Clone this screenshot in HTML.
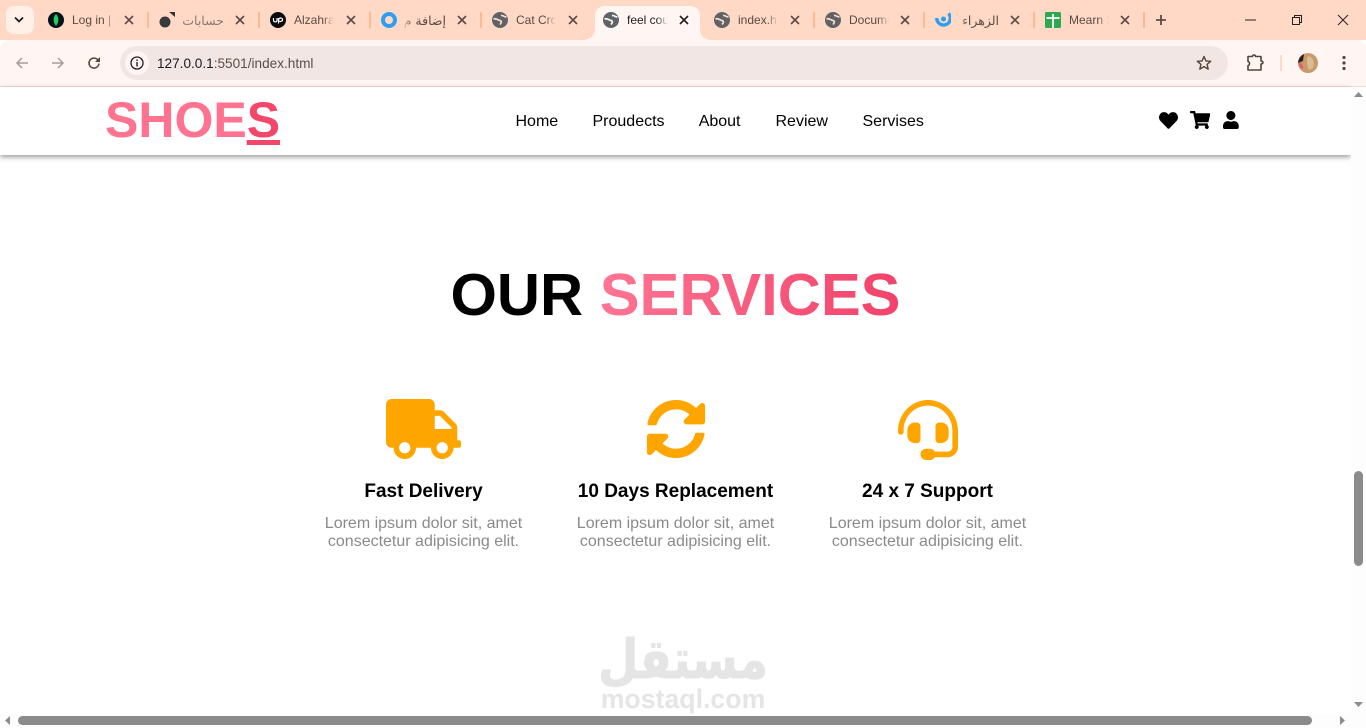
<!DOCTYPE html>
<html lang="en">
<head>
<meta charset="utf-8">
<title>feel cool</title>
<style>
*{box-sizing:border-box}
html,body{margin:0;padding:0;width:1366px;height:728px;overflow:hidden;background:#fff;font-family:"Liberation Sans","DejaVu Sans",sans-serif}
.a{position:absolute}
svg{position:absolute;display:block}
#strip{left:0;top:0;width:1366px;height:40px;background:#ffd9c6}
#bar{left:0;top:40px;width:1366px;height:47px;background:#fff6f3;border-radius:10px 10px 0 0;border-bottom:1px solid #f7dcd2}
#omni{left:120px;top:46px;width:1108px;height:34px;border-radius:17px;background:#f1e6e3}
.sep{position:absolute;top:12px;width:2px;height:16px;background:#fdb98f}
.t{position:absolute;top:13px;height:15px;width:46px;overflow:hidden;white-space:nowrap;font-size:12px;line-height:15px;color:#5b4a44;-webkit-mask-image:linear-gradient(90deg,#000 72%,transparent 100%);mask-image:linear-gradient(90deg,#000 72%,transparent 100%)}
.r{text-align:right;direction:rtl;font-family:"DejaVu Sans",sans-serif;font-size:12.500px;-webkit-mask-image:linear-gradient(270deg,#000 78%,transparent 100%);mask-image:linear-gradient(270deg,#000 78%,transparent 100%)}
.nav{position:absolute;top:113px;font-size:16px;line-height:18px;color:#000;white-space:nowrap}
.card{position:absolute;top:482px;width:252px;text-align:center}
.card h3{margin:0;font-size:19px;line-height:20px;font-weight:700;color:#000}
.card p{margin:13px 0 0;font-size:16px;line-height:18px;color:#8a8a8a}
</style>
</head>
<body>
<div class="a" id="strip"></div>

<!-- tab search button -->
<div class="a" style="left:6px;top:6px;width:28px;height:28px;border-radius:8px;background:#fff0e8"></div>
<svg style="left:14px;top:16px" width="10" height="8" viewBox="0 0 10 8"><path d="M1 1.500 5 5.500 9 1.500" fill="none" stroke="#1f1f1f" stroke-width="1.800"/></svg>

<div class="a" id="bar"></div>

<!-- active tab -->
<svg style="left:583px;top:6px" width="128" height="34" viewBox="0 0 128 34"><path d="M0 34C7 34 12 29 12 24V10C12 4 16 0 22 0H107C113 0 117 4 117 10V24C117 29 121 34 128 34Z" fill="#fff6f3"/></svg>

<!-- separators -->
<div class="sep" style="left:147px"></div>
<div class="sep" style="left:258px"></div>
<div class="sep" style="left:369px"></div>
<div class="sep" style="left:480px"></div>
<div class="sep" style="left:813px"></div>
<div class="sep" style="left:923px"></div>
<div class="sep" style="left:1033px"></div>
<div class="sep" style="left:1143px"></div>

<!-- favicons -->
<svg style="left:48px;top:12px" width="16" height="16" viewBox="0 0 16 16"><circle cx="8" cy="8" r="8" fill="#06121c"/><path d="M8 2C11 5 11.300 9.500 8 14 4.700 9.500 5 5 8 2Z" fill="#22d260"/></svg>
<svg style="left:159px;top:12px" width="16" height="16" viewBox="0 0 16 16"><circle cx="6" cy="10" r="5.500" fill="#3a3a3a"/><path d="M10 0H16V5Z" fill="#333"/></svg>
<svg style="left:270px;top:12px" width="16" height="16" viewBox="0 0 16 16"><circle cx="8" cy="8" r="8" fill="#0b0b0b"/><path d="M3.500 6V8.500A1.800 1.800 0 0 0 7 8.500V6M8.500 11.500V6M8.500 7.500C10 5 13 6 12.500 8 12 10 9.500 9.800 8.500 8.500" fill="none" stroke="#fff" stroke-width="1.200"/></svg>
<svg style="left:381px;top:12px" width="16" height="16" viewBox="0 0 16 16"><circle cx="8" cy="8" r="6" fill="none" stroke="#2e9ff0" stroke-width="4"/></svg>
<svg style="left:492px;top:12px" width="16" height="16" viewBox="0 0 16 16"><circle cx="8" cy="8" r="8" fill="#5f6368"/><path d="M1.500 7C4 6 6 8 8 8.500 10 9 9.500 11 8 12.500M9 3.500C11 3 12 5 14.500 5" fill="none" stroke="#ffd9c6" stroke-width="1.700"/></svg>
<svg style="left:603px;top:12px" width="16" height="16" viewBox="0 0 16 16"><circle cx="8" cy="8" r="8" fill="#5f6368"/><path d="M1.500 7C4 6 6 8 8 8.500 10 9 9.500 11 8 12.500M9 3.500C11 3 12 5 14.500 5" fill="none" stroke="#fff6f3" stroke-width="1.700"/></svg>
<svg style="left:714px;top:12px" width="16" height="16" viewBox="0 0 16 16"><circle cx="8" cy="8" r="8" fill="#5f6368"/><path d="M1.500 7C4 6 6 8 8 8.500 10 9 9.500 11 8 12.500M9 3.500C11 3 12 5 14.500 5" fill="none" stroke="#ffd9c6" stroke-width="1.700"/></svg>
<svg style="left:825px;top:12px" width="16" height="16" viewBox="0 0 16 16"><circle cx="8" cy="8" r="8" fill="#5f6368"/><path d="M1.500 7C4 6 6 8 8 8.500 10 9 9.500 11 8 12.500M9 3.500C11 3 12 5 14.500 5" fill="none" stroke="#ffd9c6" stroke-width="1.700"/></svg>
<svg style="left:935px;top:12px" width="16" height="16" viewBox="0 0 16 16"><path d="M13.500 1.500A6.800 6.800 0 1 1 1.800 6" fill="none" stroke="#2e9ff0" stroke-width="3.400"/><circle cx="8.500" cy="7" r="2.500" fill="#2e9ff0"/></svg>
<svg style="left:1045px;top:12px" width="16" height="16" viewBox="0 0 16 16"><rect width="16" height="16" rx="1.500" fill="#2ea84f"/><path d="M1.500 6H14.500M8 2V16" stroke="#fff" stroke-width="1.800"/></svg>

<!-- tab titles -->
<div class="t" style="left:72px;width:40px;-webkit-mask-image:linear-gradient(90deg,#000 88%,transparent 100%);mask-image:linear-gradient(90deg,#000 88%,transparent 100%)">Log in | Mon</div>
<div class="t r" style="left:176px;width:48px;color:#8a7a74;-webkit-mask-image:none;mask-image:none">حسابات</div>
<div class="t" style="left:294px;width:40px">Alzahraa</div>
<div class="t r" style="left:403px;width:43px">إضافة م</div>
<div class="t" style="left:516px;width:40px">Cat Crochet</div>
<div class="t" style="left:627px;width:41px;color:#1f1f1f">feel cou</div>
<div class="t" style="left:738px;width:40px">index.html</div>
<div class="t" style="left:849px;width:40px">Document</div>
<div class="t r" style="left:958px;width:41px">الزهراء د</div>
<div class="t" style="left:1069px;width:40px">Mearn Stack</div>

<!-- tab closes -->
<svg style="left:124px;top:15px" width="10" height="10" viewBox="0 0 10 10"><path d="M1 1 9 9M9 1 1 9" stroke="#5b4a44" stroke-width="1.600"/></svg>
<svg style="left:235px;top:15px" width="10" height="10" viewBox="0 0 10 10"><path d="M1 1 9 9M9 1 1 9" stroke="#5b4a44" stroke-width="1.600"/></svg>
<svg style="left:346px;top:15px" width="10" height="10" viewBox="0 0 10 10"><path d="M1 1 9 9M9 1 1 9" stroke="#5b4a44" stroke-width="1.600"/></svg>
<svg style="left:457px;top:15px" width="10" height="10" viewBox="0 0 10 10"><path d="M1 1 9 9M9 1 1 9" stroke="#5b4a44" stroke-width="1.600"/></svg>
<svg style="left:568px;top:15px" width="10" height="10" viewBox="0 0 10 10"><path d="M1 1 9 9M9 1 1 9" stroke="#5b4a44" stroke-width="1.600"/></svg>
<svg style="left:679px;top:15px" width="10" height="10" viewBox="0 0 10 10"><path d="M1 1 9 9M9 1 1 9" stroke="#1f1f1f" stroke-width="1.600"/></svg>
<svg style="left:790px;top:15px" width="10" height="10" viewBox="0 0 10 10"><path d="M1 1 9 9M9 1 1 9" stroke="#5b4a44" stroke-width="1.600"/></svg>
<svg style="left:900px;top:15px" width="10" height="10" viewBox="0 0 10 10"><path d="M1 1 9 9M9 1 1 9" stroke="#5b4a44" stroke-width="1.600"/></svg>
<svg style="left:1010px;top:15px" width="10" height="10" viewBox="0 0 10 10"><path d="M1 1 9 9M9 1 1 9" stroke="#5b4a44" stroke-width="1.600"/></svg>
<svg style="left:1120px;top:15px" width="10" height="10" viewBox="0 0 10 10"><path d="M1 1 9 9M9 1 1 9" stroke="#5b4a44" stroke-width="1.600"/></svg>

<!-- new tab -->
<svg style="left:1155px;top:14px" width="12" height="12" viewBox="0 0 12 12"><path d="M6 1V11M1 6H11" stroke="#5b4a44" stroke-width="1.800"/></svg>

<!-- window controls -->
<svg style="left:1245px;top:19px" width="12" height="2" viewBox="0 0 12 2"><path d="M0 1H11" stroke="#222" stroke-width="1"/></svg>
<svg style="left:1291px;top:14px" width="12" height="12" viewBox="0 0 12 12"><path d="M1.500 3.500H8.500V10.500H1.500ZM3.500 3.500V1.500H10.500V8.500H8.500" fill="none" stroke="#222" stroke-width="1"/></svg>
<svg style="left:1337px;top:14px" width="12" height="12" viewBox="0 0 12 12"><path d="M1 1 11 11M11 1 1 11" stroke="#222" stroke-width="1"/></svg>

<!-- toolbar -->
<svg style="left:15px;top:56px" width="14" height="14" viewBox="0 0 14 14"><path d="M13 7H2M7 2 2 7 7 12" fill="none" stroke="#a89c98" stroke-width="1.500"/></svg>
<svg style="left:51px;top:56px" width="14" height="14" viewBox="0 0 14 14"><path d="M1 7H12M7 2 12 7 7 12" fill="none" stroke="#a89c98" stroke-width="1.500"/></svg>
<svg style="left:87px;top:56px" width="14" height="14" viewBox="0 0 14 14"><path d="M12 7.500A5 5 0 1 1 10.500 3.500L12.500 5.500" fill="none" stroke="#55433c" stroke-width="1.500"/><path d="M13 1V6H8Z" fill="#55433c"/></svg>

<div class="a" id="omni"></div>
<div class="a" style="left:125px;top:51px;width:24px;height:24px;border-radius:12px;background:#fff6f3"></div>
<svg style="left:130px;top:56px" width="14" height="14" viewBox="0 0 14 14"><circle cx="7" cy="7" r="6" fill="none" stroke="#1f1f1f" stroke-width="1.300"/><path d="M7 6V10.500M7 3.500V5" stroke="#1f1f1f" stroke-width="1.400"/></svg>
<div class="a" style="left:157px;top:56px;font-size:13.600px;line-height:16px;color:#5c4f4a;white-space:nowrap"><span style="color:#1b1b1f">127.0.0.1</span>:5501/index.html</div>

<svg style="left:1196px;top:55px" width="16" height="16" viewBox="0 0 16 16"><path d="M8 1.500 9.900 5.900 14.700 6.300 11.100 9.400 12.200 14.100 8 11.600 3.800 14.100 4.900 9.400 1.300 6.300 6.100 5.900Z" fill="none" stroke="#55433c" stroke-width="1.400" stroke-linejoin="round"/></svg>
<svg style="left:1246px;top:54px" width="18" height="18" viewBox="0 0 18 18"><path d="M2 2.500H6.500C6.500 0.500 9.500 0.500 9.500 2.500H15V7C17.500 7 17.500 10 15 10V16H2V11.500C4 11.500 4 7.500 2 7.500Z" fill="none" stroke="#55433c" stroke-width="1.600" stroke-linejoin="round"/></svg>
<div class="a" style="left:1280px;top:55px;width:2px;height:16px;background:#ffd9c6"></div>
<svg style="left:1298px;top:53px" width="20" height="20" viewBox="0 0 20 20"><circle cx="10" cy="10" r="10" fill="#c79a6b"/><path d="M0 10A10 10 0 0 1 6 1L5 8Z" fill="#2a2020"/><path d="M1 10C3 9 5 12 5 16 3 15 1 13 1 10Z" fill="#e0566f"/><path d="M10 3C15 4 17 9 15 15L11 17C9 12 8 7 10 3Z" fill="#dcbb94"/></svg>
<svg style="left:1342px;top:55px" width="4" height="16" viewBox="0 0 4 16"><circle cx="2" cy="2.500" r="1.600" fill="#55433c"/><circle cx="2" cy="8" r="1.600" fill="#55433c"/><circle cx="2" cy="13.500" r="1.600" fill="#55433c"/></svg>

<!-- page header -->
<div class="a" style="left:0;top:87px;width:1351px;height:68px;background:#fff;box-shadow:0 2px 5px rgba(0,0,0,.4)"></div>
<div class="a" style="left:105px;top:92px;font-size:50px;line-height:57px;font-weight:700;color:#ff7390;white-space:nowrap">SHOE<span style="color:#f2476b;text-decoration:underline">S</span></div>

<div class="nav" style="left:515.500px">Home</div>
<div class="nav" style="left:592.500px">Proudects</div>
<div class="nav" style="left:698.700px">About</div>
<div class="nav" style="left:775.500px">Review</div>
<div class="nav" style="left:862.500px">Servises</div>

<svg style="left:1159px;top:110.500px" width="19" height="19" viewBox="0 0 512 512"><path d="M462.3 62.6C407.5 15.9 326 24.3 275.7 76.2L256 96.5l-19.7-20.3C186.1 24.3 104.5 15.9 49.7 62.6c-62.8 53.6-66.100 149.800-9.900 207.900l193.500 199.800c12.500 12.900 32.800 12.900 45.300 0l193.500-199.800c56.300-58.100 53-154.300-9.800-207.900z" fill="#000"/></svg>
<svg style="left:1190px;top:111px" width="20.250" height="18" viewBox="0 0 576 512"><path d="M528.120 301.319l47.273-208C578.806 78.301 567.391 64 551.990 64H159.208l-9.166-44.810C147.758 8.021 137.930 0 126.529 0H24C10.745 0 0 10.745 0 24v16c0 13.255 10.745 24 24 24h69.883l70.248 343.435C147.325 417.100 136 435.222 136 456c0 30.928 25.072 56 56 56s56-25.072 56-56c0-15.674-6.447-29.835-16.824-40h209.647C430.447 426.165 424 440.326 424 456c0 30.928 25.072 56 56 56s56-25.072 56-56c0-22.172-12.888-41.332-31.579-50.405l5.517-24.276c3.413-15.018-8.002-29.319-23.403-29.319H218.117l-6.545-32h293.145c11.206 0 20.920-7.754 23.403-18.681z" fill="#000"/></svg>
<svg style="left:1223px;top:111px" width="15.750" height="18" viewBox="0 0 448 512"><path d="M224 256c70.700 0 128-57.300 128-128S294.700 0 224 0 96 57.300 96 128s57.300 128 128 128zm89.600 32h-16.700c-22.200 10.200-46.900 16-72.900 16s-50.600-5.800-72.900-16h-16.700C60.200 288 0 348.200 0 422.400V464c0 26.500 21.500 48 48 48h352c26.500 0 48-21.500 48-48v-41.600c0-74.200-60.200-134.400-134.400-134.400z" fill="#000"/></svg>

<!-- heading -->
<div class="a" style="left:0;top:259px;width:1351px;text-align:center;font-size:59.700px;line-height:72px;font-weight:700;color:#000;white-space:nowrap">OUR <span style="background:linear-gradient(90deg,#ff7593,#f1426a);-webkit-background-clip:text;background-clip:text;color:transparent">SERVICES</span></div>

<!-- service icons -->
<svg style="left:385.500px;top:399px" width="75" height="60" viewBox="0 0 640 512"><path d="M624 352h-16V243.900c0-12.700-5.100-24.900-14.100-33.900L494 110.100c-9-9-21.200-14.100-33.900-14.100H416V48c0-26.500-21.500-48-48-48H48C21.500 0 0 21.500 0 48v320c0 26.500 21.500 48 48 48h16c0 53 43 96 96 96s96-43 96-96h128c0 53 43 96 96 96s96-43 96-96h48c8.800 0 16-7.200 16-16v-32c0-8.800-7.200-16-16-16zM160 464c-26.500 0-48-21.500-48-48s21.500-48 48-48 48 21.500 48 48-21.500 48-48 48zm320 0c-26.500 0-48-21.500-48-48s21.500-48 48-48 48 21.500 48 48-21.500 48-48 48zm80-208H416V144h44.100l99.900 99.900V256z" fill="#ffa500"/></svg>
<svg style="left:645.700px;top:399px" width="60" height="60" viewBox="0 0 512 512"><path d="M370.720 133.280C339.458 104.008 298.888 87.962 255.848 88c-77.458.068-144.328 53.178-162.791 126.850-1.344 5.363-6.122 9.150-11.651 9.150H24.103c-7.498 0-13.194-6.807-11.807-14.176C33.933 94.924 134.813 8 256 8c66.448 0 126.791 26.136 171.315 68.685L463.030 40.970C478.149 25.851 504 36.559 504 57.941V192c0 13.255-10.745 24-24 24H345.941c-21.382 0-32.090-25.851-16.971-40.971l41.750-41.749zM32 296h134.059c21.382 0 32.090 25.851 16.971 40.971l-41.750 41.750c31.262 29.273 71.835 45.319 114.876 45.280 77.418-.070 144.315-53.144 162.787-126.849 1.344-5.363 6.122-9.150 11.651-9.150h57.304c7.498 0 13.194 6.807 11.807 14.176C478.067 417.076 377.187 504 256 504c-66.448 0-126.791-26.136-171.315-68.685L48.970 471.030C33.851 486.149 8 475.441 8 454.059V320c0-13.255 10.745-24 24-24z" fill="#ffa500"/></svg>
<svg style="left:898px;top:400px" width="60" height="60" viewBox="0 0 512 512"><path d="M192 224c0-17.700-14.300-32-32-32h-16c-35.300 0-64 28.700-64 64v48c0 35.300 28.700 64 64 64h16c17.700 0 32-14.300 32-32V224zM368 368c35.300 0 64-28.700 64-64v-48c0-35.300-28.700-64-64-64h-16c-17.700 0-32 14.300-32 32v112c0 17.700 14.300 32 32 32h16zM256 0C113 0 4.600 119 0 256v16c0 13.300 10.700 24 24 24s24-10.700 24-24v-16c0-114.700 93.300-208 208-208s208 93.300 208 208v144c0 22.100-17.900 40-40 40H313.300c-8.300-14.300-23.600-24-41.300-24h-32c-26.500 0-48 21.500-48 48s21.500 48 48 48h32c17.700 0 33-9.700 41.300-24H424c48.600 0 88-39.400 88-88V256C507.400 119 399 0 256 0z" fill="#ffa500"/></svg>

<!-- cards -->
<div class="card" style="left:297.500px"><h3>Fast Delivery</h3><p>Lorem ipsum dolor sit, amet<br>consectetur adipisicing elit.</p></div>
<div class="card" style="left:549.500px"><h3>10 Days Replacement</h3><p>Lorem ipsum dolor sit, amet<br>consectetur adipisicing elit.</p></div>
<div class="card" style="left:801.500px"><h3>24 x 7 Support</h3><p>Lorem ipsum dolor sit, amet<br>consectetur adipisicing elit.</p></div>

<!-- watermark -->
<div class="a" style="left:483px;top:620px;width:400px;text-align:center;font-family:'DejaVu Sans',sans-serif;font-size:54px;line-height:80px;font-weight:700;color:#e5e5e5;white-space:nowrap;transform:scaleX(.86);-webkit-text-stroke:1px #e5e5e5">مستقل</div>
<div class="a" style="left:483px;top:684px;width:400px;text-align:center;font-size:26.700px;line-height:30px;font-weight:700;color:#e5e5e5;white-space:nowrap">mostaql.com</div>

<!-- scrollbars -->
<div class="a" style="left:1351px;top:87px;width:15px;height:641px;background:#fdfdfd"></div>
<div class="a" style="left:0;top:714px;width:1366px;height:14px;background:#fdfdfd"></div>
<div class="a" style="left:1354px;top:471px;width:9px;height:95px;border-radius:4.500px;background:#8b8b8b"></div>
<div class="a" style="left:18px;top:716px;width:1294px;height:9px;border-radius:4.500px;background:#8b8b8b"></div>
<svg style="left:1354px;top:92px" width="9" height="6" viewBox="0 0 9 6"><path d="M4.500 0 9 5H0Z" fill="#8b8b8b"/></svg>
<svg style="left:1354px;top:702px" width="9" height="6" viewBox="0 0 9 6"><path d="M0 0H9L4.500 5Z" fill="#8b8b8b"/></svg>
<svg style="left:5px;top:716px" width="6" height="9" viewBox="0 0 6 9"><path d="M5 0V9L0 4.500Z" fill="#8b8b8b"/></svg>
<svg style="left:1340px;top:716px" width="6" height="9" viewBox="0 0 6 9"><path d="M0 0V9L5 4.500Z" fill="#8b8b8b"/></svg>
</body>
</html>
